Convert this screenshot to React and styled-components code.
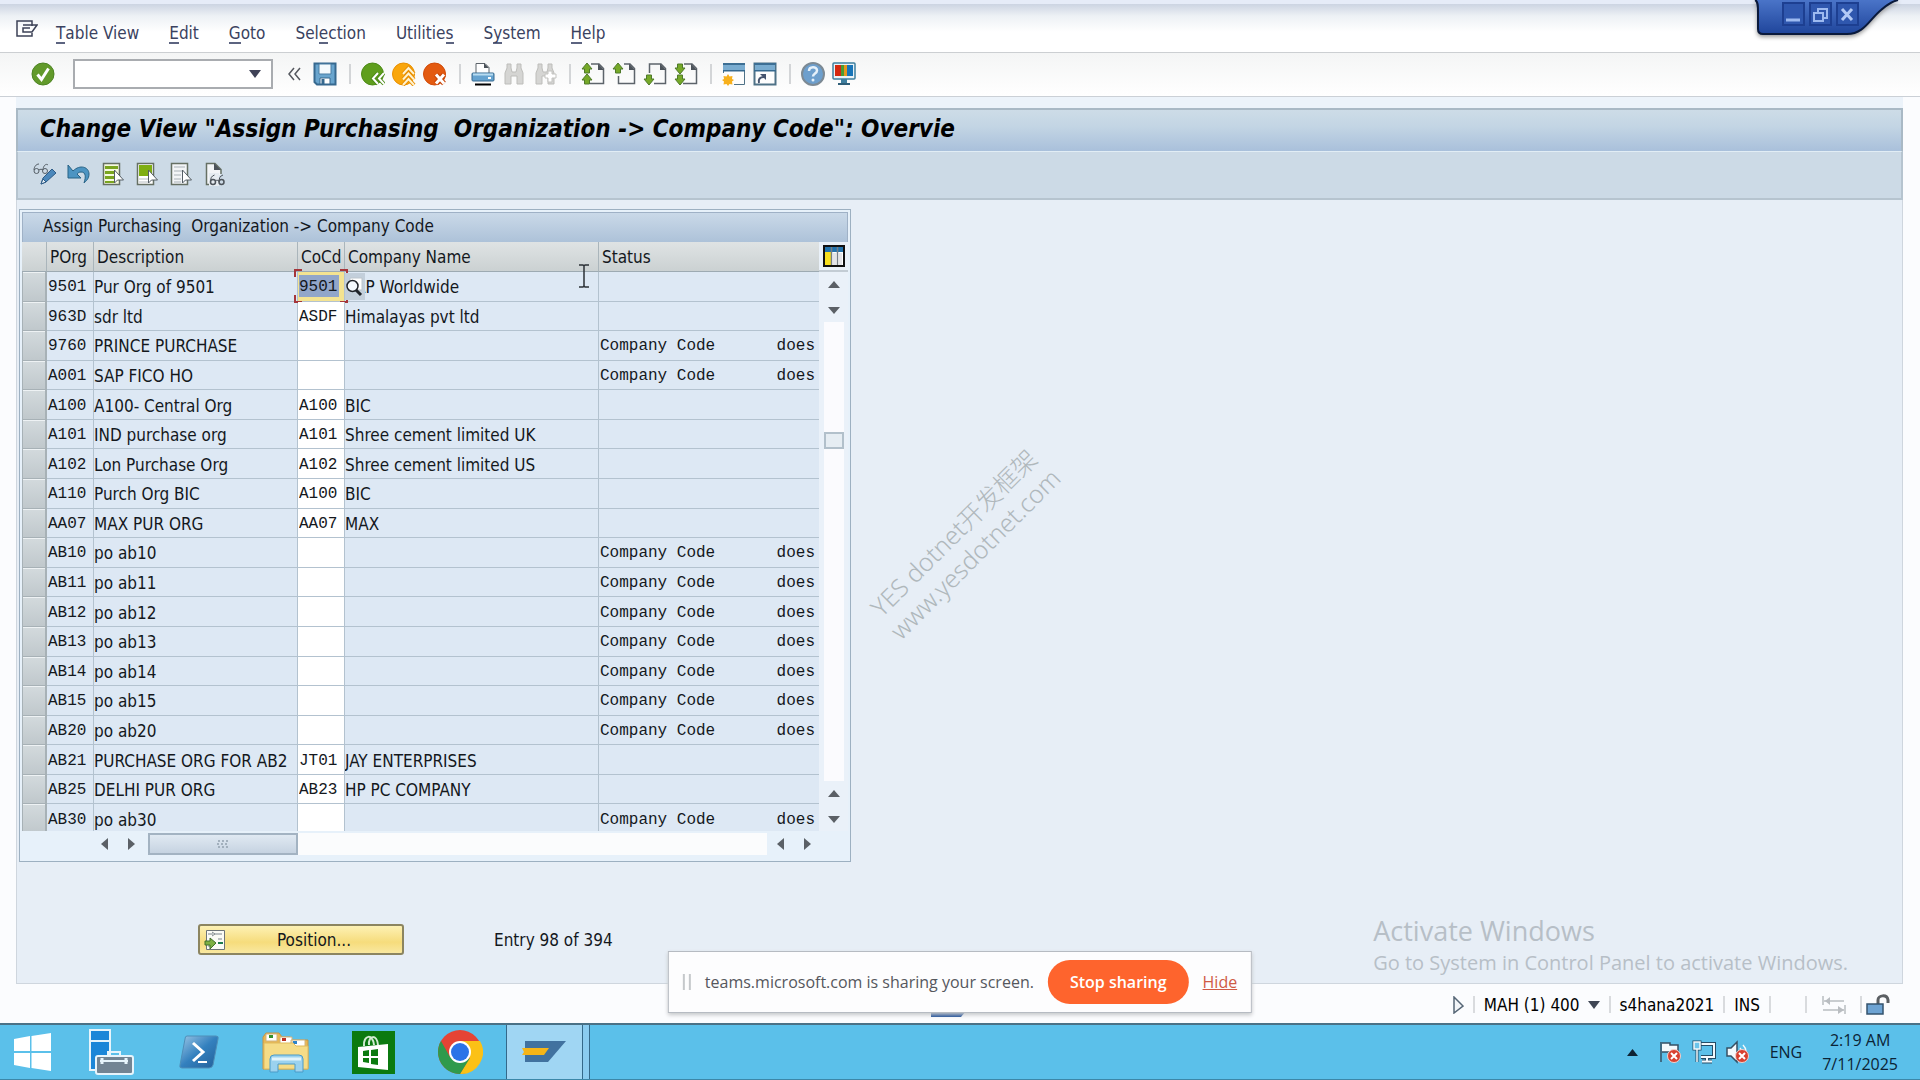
import React from 'react';
import styled, { createGlobalStyle, css } from 'styled-components';

const ui = '"DejaVu Sans Condensed", "DejaVu Sans", sans-serif';
const mono = '"Liberation Mono", monospace';
const segoe = '"Open Sans", "Noto Sans", sans-serif';

const menus = [
  ['', 'T', 'able View'],
  ['', 'E', 'dit'],
  ['', 'G', 'oto'],
  ['Sel', 'e', 'ction'],
  ['Utilitie', 's', ''],
  ['S', 'y', 'stem'],
  ['', 'H', 'elp'],
];

const rows = [
  ['9501', 'Pur Org of 9501', '9501', 'SAP Worldwide'],
  ['963D', 'sdr ltd', 'ASDF', 'Himalayas pvt ltd'],
  ['9760', 'PRINCE PURCHASE', '', ''],
  ['A001', 'SAP FICO HO', '', ''],
  ['A100', 'A100- Central Org', 'A100', 'BIC'],
  ['A101', 'IND purchase org', 'A101', 'Shree cement limited UK'],
  ['A102', 'Lon Purchase Org', 'A102', 'Shree cement limited US'],
  ['A110', 'Purch Org BIC', 'A100', 'BIC'],
  ['AA07', 'MAX PUR ORG', 'AA07', 'MAX'],
  ['AB10', 'po ab10', '', ''],
  ['AB11', 'po ab11', '', ''],
  ['AB12', 'po ab12', '', ''],
  ['AB13', 'po ab13', '', ''],
  ['AB14', 'po ab14', '', ''],
  ['AB15', 'po ab15', '', ''],
  ['AB20', 'po ab20', '', ''],
  ['AB21', 'PURCHASE ORG FOR AB2', 'JT01', 'JAY ENTERPRISES'],
  ['AB25', 'DELHI PUR ORG', 'AB23', 'HP PC COMPANY'],
  ['AB30', 'po ab30', '', ''],
];

const Svg = ({ w = 24, h = 24, box = '0 0 24 24', children }) => (
  <svg width={w} height={h} viewBox={box} fill="none" aria-hidden="true">
    {children}
  </svg>
);

const Sheet = () => (
  <path d="M10 2h8l4.500 4.500V21.500H9" stroke="#5d646b" strokeWidth="1.500" fill="none" />
);
const Fold = () => <path d="M17 1.500V8h6z" fill="#4d545b" />;
const Up = ({ y = 0 }) => (
  <path
    d={`M6 ${1 + y}l5 6H8.500v4h-5V${7 + y}H1z`}
    fill="#76a928"
    stroke="#4f7a2a"
  />
);
const Down = ({ y = 0 }) => (
  <path
    d={`M6 ${23 + y}l5-6H8.500v-4h-5v4H1z`}
    fill="#76a928"
    stroke="#4f7a2a"
  />
);
const Binoculars = () => (
  <path
    d="M3 22V11l2-5V2h4v4l1 4h4l1-4V2h4v4l2 5v11h-6v-8h-6v8z"
    fill="#d5d5d3"
    stroke="#bdbdba"
  />
);

const icons = {
  check: (
    <Svg>
      <circle cx="12" cy="12" r="11" fill="#629a2b" stroke="#4d8423" />
      <path d="M6.500 12.500l4 5 7-11" stroke="#fff" strokeWidth="3" />
    </Svg>
  ),
  save: (
    <Svg>
      <path d="M1.500 1.500h21v21H4l-2.500-2.500z" fill="#69a5ce" stroke="#36698f" strokeWidth="2" />
      <path d="M6 2h12v10H6z" fill="#f4fafd" stroke="#4a7ea4" />
      <path d="M7 16h10v6H7z" fill="#fff" stroke="#36698f" />
      <path d="M8.500 17h3v5h-3z" fill="#36698f" />
    </Svg>
  ),
  back: (
    <Svg>
      <circle cx="11.500" cy="12" r="11" fill="#5f9e1d" stroke="#4c8a17" />
      <path d="M17 11l-5 5.500 5 5.500M23 11l-5 5.500 5 5.500" stroke="#4c8a17" strokeWidth="4" />
      <path d="M17 11l-5 5.500 5 5.500M23 11l-5 5.500 5 5.500" stroke="#fff" strokeWidth="2" />
    </Svg>
  ),
  exit: (
    <Svg>
      <circle cx="11.500" cy="12" r="11" fill="#f9a60c" stroke="#e98f00" />
      <path d="M11 12l5.500-6 5.500 6M11 17.500l5.500-6 5.500 6M11 23l5.500-6 5.500 6" stroke="#e98f00" strokeWidth="4" />
      <path d="M11 12l5.500-6 5.500 6M11 17.500l5.500-6 5.500 6M11 23l5.500-6 5.500 6" stroke="#fff3d0" strokeWidth="2" />
    </Svg>
  ),
  cancel: (
    <Svg>
      <circle cx="11.500" cy="12" r="11" fill="#e35a10" stroke="#d14a08" />
      <path d="M13 12.500l8 9M21 12.500l-8 9" stroke="#c84406" strokeWidth="5" />
      <path d="M13 12.500l8 9M21 12.500l-8 9" stroke="#fff" strokeWidth="3" />
    </Svg>
  ),
  print: (
    <Svg>
      <path d="M5 11V1.500h9l4 4V11" fill="#fff" stroke="#5d646b" />
      <path d="M13 1v5h5z" fill="#4d545b" />
      <rect x="1" y="11" width="22" height="8" rx="1" fill="#66a3d0" stroke="#36698f" />
      <path d="M2 12.500h20" stroke="#b9dcf1" strokeWidth="2" />
      <path d="M17 16h3" stroke="#fff" strokeWidth="2" />
      <path d="M4 21.500h16v2H4z" fill="#000" />
    </Svg>
  ),
  find: (
    <Svg>
      <Binoculars />
    </Svg>
  ),
  findNext: (
    <Svg>
      <Binoculars />
      <path d="M15 9h4v3h4v4h-4v4h-4v-4h-3v-4h3z" fill="#fff" stroke="#c4c4c1" />
    </Svg>
  ),
  first: (
    <Svg>
      <Sheet />
      <Fold />
      <Up />
      <Up y={11} />
    </Svg>
  ),
  prev: (
    <Svg>
      <path d="M12 2h6l4.500 4.500V21.500H6.500V14" stroke="#5d646b" strokeWidth="1.500" />
      <Fold />
      <Up />
    </Svg>
  ),
  next: (
    <Svg>
      <path d="M6.500 11V2H18l4.500 4.500V21.500H11" stroke="#5d646b" strokeWidth="1.500" />
      <Fold />
      <Down />
    </Svg>
  ),
  last: (
    <Svg>
      <Sheet />
      <Fold />
      <Down y={-11} />
      <Down />
    </Svg>
  ),
  session: (
    <Svg>
      <path d="M1.500 1.500h21v21h-21z" fill="#fdfdfd" stroke="#4f7287" />
      <path d="M1 1h22v8H1z" fill="#79acd0" />
      <path d="M1 1h22v2H1z" fill="#3d6f94" />
      <path d="M1 8h22v1.500H1z" fill="#36698f" />
      <path d="M0 11h12v13H0z" fill="#fdfdfd" />
      <path d="M6 12l1.500 2.500 3-.5-.5 3L12 18l-2 1.500.5 3-3-.5L6 24l-1.500-2-3 .5.5-3L0 18l2-1-.5-3 3 .5z" fill="#f7b01c" />
    </Svg>
  ),
  shortcut: (
    <Svg>
      <path d="M1.500 1.500h21v21h-21z" fill="#fdfdfd" stroke="#4f7287" strokeWidth="2" />
      <path d="M2 2h20v7H2z" fill="#79acd0" />
      <path d="M1 1h22v2H1z" fill="#3d6f94" />
      <path d="M1 8h22v1.500H1z" fill="#36698f" />
      <path d="M6 21c-1-4 1-6 5-6" stroke="#46546e" strokeWidth="2" />
      <path d="M7 12h6v6z" fill="#46546e" />
    </Svg>
  ),
  help: (
    <Svg>
      <circle cx="12" cy="12" r="11" fill="#6d9fcd" stroke="#7d8a94" strokeWidth="2" />
      <path d="M8 9c0-5 8-5 8-.5 0 3-4 3-4 6" stroke="#e6f1fa" strokeWidth="2.500" />
      <circle cx="12" cy="18" r="1.500" fill="#e6f1fa" />
    </Svg>
  ),
  monitor: (
    <Svg>
      <rect x="1" y="1" width="22" height="16" rx="1" fill="#e8f2f7" stroke="#3e7f9f" strokeWidth="1.500" />
      <path d="M3 3h6v11H3z" fill="#d4270f" />
      <path d="M9 3h3v11H9z" fill="#4b9b32" />
      <path d="M12 3h3v11h-3z" fill="#e8961b" />
      <path d="M15 3h6v11h-6z" fill="#1774b8" />
      <path d="M9 17h6v4H9z" fill="#3e7f9f" />
      <path d="M6 21h12v2H6z" fill="#2f5f79" />
    </Svg>
  ),
  display: (
    <Svg>
      <path d="M6 2C3 2 1 5 1 8M15 3c-2-2-5 1-5 5" stroke="#555e66" />
      <circle cx="3.500" cy="9" r="2.500" stroke="#555e66" />
      <circle cx="12" cy="9" r="2.500" stroke="#555e66" />
      <path d="M6 8c1-1 3-1 4 0" stroke="#555e66" />
      <path d="M8 22l2-6L19 7l4 4-10 9z" fill="#4a87bb" stroke="#2d5b86" />
      <path d="M8 22l2-5 3 3z" fill="#e8f1f7" stroke="#2d5b86" />
    </Svg>
  ),
  undo: (
    <Svg>
      <path d="M6 9c7-7 16-4 16 3 0 5-3 7-5 9 2-6 2-11-3-11-2 0-3 1-4 2l4 4H1V3z" fill="#4c94c2" stroke="#276285" />
    </Svg>
  ),
  selectAll: (
    <Svg>
      <path d="M2.500 1.500h16v21h-16z" fill="#f6fadf" stroke="#667064" strokeWidth="1.500" />
      <path d="M4 4h13v3H4zM4 9h11v3H4zM4 14h9v3H4zM4 19h9v2H4z" fill="#7aa51f" />
      <path d="M13.500 8v13l3-3h6z" fill="#fff" stroke="#555e66" />
    </Svg>
  ),
  selectBlock: (
    <Svg>
      <path d="M2.500 1.500h16v21h-16z" fill="#fff" stroke="#667064" strokeWidth="1.500" />
      <path d="M4 3h13v11H4z" fill="#7fae12" />
      <path d="M4 17h9M4 20h9" stroke="#b6bcc0" />
      <path d="M13.500 8v13l3-3h6z" fill="#fff" stroke="#555e66" />
    </Svg>
  ),
  deselect: (
    <Svg>
      <path d="M2.500 1.500h16v21h-16z" fill="#f3f5f7" stroke="#667064" strokeWidth="1.500" />
      <path d="M5 5h11M5 9h9M5 13h7M5 17h7M5 20h7" stroke="#a9b1b7" />
      <path d="M13.500 8v13l3-3h6z" fill="#fff" stroke="#555e66" />
    </Svg>
  ),
  details: (
    <Svg>
      <path d="M7 22.500H3.500v-21H12l6 6V12" fill="#f3f5f7" stroke="#667064" strokeWidth="1.500" />
      <path d="M11 1v7h7z" fill="#4d545b" />
      <path d="M6 11h10v13H6z" fill="#e6ecf1" />
      <circle cx="10" cy="20" r="2.500" stroke="#4d545b" strokeWidth="1.500" />
      <circle cx="18.500" cy="20" r="2.500" stroke="#4d545b" strokeWidth="1.500" />
      <path d="M7.500 20c0-4 1-6 4-7M16 20c0-4 1-6 4-7M12.500 19c1-1 2-1 3.500 0" stroke="#4d545b" />
    </Svg>
  ),
};

const toolbar = [
  [['save', 'Save']],
  [['back', 'Back'], ['exit', 'Exit'], ['cancel', 'Cancel']],
  [['print', 'Print'], ['find', 'Find'], ['findNext', 'Find next']],
  [['first', 'First page'], ['prev', 'Previous page'], ['next', 'Next page'], ['last', 'Last page']],
  [['session', 'New session'], ['shortcut', 'Create shortcut']],
  [['help', 'Help'], ['monitor', 'Customize local layout']],
];

const appActions = [
  ['display', 'Display / Change'],
  ['undo', 'Undo'],
  ['selectAll', 'Select all'],
  ['selectBlock', 'Select block'],
  ['deselect', 'Deselect all'],
  ['details', 'Details'],
];

const Arrow = ({ dir }) => {
  const d = {
    up: 'M0 9l6-7 6 7z',
    down: 'M0 3l6 7 6-7z',
    left: 'M9 0L2 6l7 6z',
    right: 'M3 0l7 6-7 6z',
  }[dir];
  return (
    <ArrowButton type="button" aria-label={`Scroll ${dir}`}>
      <Svg w={12} h={12} box="0 0 12 12">
        <path d={d} fill="#5b6066" />
      </Svg>
    </ArrowButton>
  );
};

const TrayCross = () => (
  <>
    <circle cx="16" cy="16" r="6.500" fill="#d8402f" stroke="#f3d0cc" />
    <path d="M13 13l6 6M19 13l-6 6" stroke="#fff" strokeWidth="2" />
  </>
);

const App = () => (
  <Desktop>
    <GlobalStyle />
    <MenuBar>
      <MenuIcon type="button" aria-label="System menu">
        <Svg w={22} h={18} box="0 0 22 18">
          <path d="M16 6V1H1v15h15v-3" stroke="#3c4257" strokeWidth="1.500" />
          <path d="M7 5h14l-5 7H7V8h7" stroke="#3c4257" strokeWidth="1.500" />
        </Svg>
      </MenuIcon>
      {menus.map(([before, key, after]) => (
        <MenuItem type="button" key={before + key + after}>
          {before}
          <u>{key}</u>
          {after}
        </MenuItem>
      ))}
    </MenuBar>
    <WindowControls>
      <Svg w={148} h={38} box="0 0 148 38">
        <defs>
          <linearGradient id="tab" x1="0" y1="0" x2="0" y2="1">
            <stop offset="0" stopColor="#4a74c8" />
            <stop offset="1" stopColor="#1f459b" />
          </linearGradient>
        </defs>
        <path d="M1 0c3 1 3 6 3 12v17q0 5 5 5h84c17 0 22-14 34-24q9-8 17-10z" fill="url(#tab)" />
        <path d="M1 0c3 1 3 6 3 12v17q0 5 5 5h84c17 0 22-14 34-24q9-8 17-10" stroke="#0a1a3c" strokeWidth="2" />
        <path d="M29 3h21v22H29zM56 3h21v22H56zM83 3h21v22H83z" fill="#2f57ae" stroke="#1d3f91" strokeWidth="2" />
        <path d="M32 20h14" stroke="#9dbaf0" strokeWidth="3" />
        <path d="M64 12V9h9v9h-4M60 13h9v8h-9z" stroke="#9dbaf0" strokeWidth="2" />
        <path d="M88 9l10 11M98 9L88 20" stroke="#b2c9f5" strokeWidth="3" />
      </Svg>
    </WindowControls>
    <Toolbar>
      <IconButton type="button" aria-label="Enter">{icons.check}</IconButton>
      <CommandField>
        <input aria-label="Command" />
        <button type="button" aria-label="Command history">
          <Svg w={12} h={8} box="0 0 12 8">
            <path d="M0 0h12L6 8z" fill="#3f4257" />
          </Svg>
        </button>
      </CommandField>
      <IconButton type="button" aria-label="Hide command field">
        <Svg w={14} h={14} box="0 0 14 14">
          <path d="M7 1L2 7l5 6M13 1L8 7l5 6" stroke="#55585f" strokeWidth="1.500" />
        </Svg>
      </IconButton>
      {toolbar.map((group, i) => (
        <ToolGroup key={i}>
          {group.map(([name, label]) => (
            <IconButton type="button" key={name} aria-label={label}>
              {icons[name]}
            </IconButton>
          ))}
        </ToolGroup>
      ))}
    </Toolbar>
    <Screen>
      <Title>{'Change View "Assign Purchasing  Organization -> Company Code": Overvie'}</Title>
      <AppToolbar>
        {appActions.map(([name, label]) => (
          <IconButton type="button" key={name} aria-label={label}>
            {icons[name]}
          </IconButton>
        ))}
      </AppToolbar>
      <Body>
        <TableBox>
          <TableTitle>{'Assign Purchasing  Organization -> Company Code'}</TableTitle>
          <TableArea>
            <TableClip>
              <Table>
                <colgroup>
                  <Col $w={25} />
                  <Col $w={47} />
                  <Col $w={204} />
                  <Col $w={47} />
                  <Col $w={254} />
                  <Col $w={220} />
                </colgroup>
                <thead>
                  <tr>
                    <th aria-label="Select" />
                    <th>POrg</th>
                    <th>Description</th>
                    <th>CoCd</th>
                    <th>Company Name</th>
                    <th>Status</th>
                  </tr>
                </thead>
                <tbody>
                  {rows.map(([org, desc, code, company], i) => (
                    <tr key={org}>
                      <SelectorCell>
                        <button type="button" aria-label={`Select ${org}`} />
                      </SelectorCell>
                      <CodeCell>{org}</CodeCell>
                      <Cell>{desc}</Cell>
                      <FieldCell $active={i === 0}>
                        <input aria-label={`Company code for ${org}`} defaultValue={code} />
                        {i === 0 && (
                          <>
                            <Focus>
                              <Svg w={54} h={34} box="0 0 54 34">
                                <path
                                  d="M1 8V1h7M46 1h7v7M53 26v7h-7M8 33H1v-7"
                                  stroke="#a5363a"
                                  strokeWidth="2"
                                />
                              </Svg>
                            </Focus>
                            <SearchHelp type="button" aria-label="Search help">
                              <Svg w={20} h={22} box="0 0 20 22">
                                <path d="M5 2h12v12H5z" fill="#fff" stroke="#bcc5cd" />
                                <circle cx="7.500" cy="10" r="5.500" fill="#f4f9fd" stroke="#20242a" strokeWidth="1.500" />
                                <path d="M11 14l5 5" stroke="#20242a" strokeWidth="3" />
                              </Svg>
                            </SearchHelp>
                          </>
                        )}
                      </FieldCell>
                      <Cell>{company}</Cell>
                      <CodeCell>
                        {!company && (
                          <StatusText>
                            <span>Company Code</span>
                            <span>does</span>
                          </StatusText>
                        )}
                      </CodeCell>
                    </tr>
                  ))}
                </tbody>
              </Table>
            </TableClip>
            <VScroll>
              <ConfigButton type="button" aria-label="Table settings">
                <Svg w={22} h={22} box="0 0 22 22">
                  <path d="M1 1h20v20H1z" fill="#fff" stroke="#111" strokeWidth="2" />
                  <path d="M2 2h18v5H2z" fill="#2373ad" />
                  <path d="M2 7h6v13H2z" fill="#f7df1e" />
                  <path d="M8.500 2v18M14.500 2v18" stroke="#777f88" strokeWidth="1.500" />
                  <path d="M10 8h3v12h-3zM16 8h3v12h-3z" fill="#e4e4e8" />
                </Svg>
              </ConfigButton>
              <Arrow dir="up" />
              <Arrow dir="down" />
              <VTrack>
                <VThumb />
              </VTrack>
              <Arrow dir="up" />
              <Arrow dir="down" />
            </VScroll>
          </TableArea>
          <HScroll>
            <Arrow dir="left" />
            <Arrow dir="right" />
            <HTrack>
              <HThumb>
                <Svg w={12} h={9} box="0 0 12 9">
                  <path d="M1 1h2M5 1h2M9 1h2M0 4h2M4 4h2M8 4h2M1 7h2M5 7h2M9 7h2" stroke="#93a1ae" strokeWidth="1.500" />
                </Svg>
              </HThumb>
            </HTrack>
            <Arrow dir="left" />
            <Arrow dir="right" />
          </HScroll>
        </TableBox>
        <Footer>
          <PositionButton type="button">
            <Svg w={22} h={22} box="0 0 22 22">
              <path d="M2.500 1.500h18v19h-18z" fill="#fbfbf6" stroke="#6d7478" />
              <path d="M4 5h5M11 5h7M14 10h4M4 17h3" stroke="#a7adb0" strokeWidth="1.500" />
              <path d="M8 3l3 2-3 2" stroke="#7d858a" />
              <path d="M14 14h5" stroke="#1f7c4d" strokeWidth="2" />
              <path d="M1 12h5V9l6 5-6 6v-4H1z" fill="#7eb043" stroke="#41702b" />
            </Svg>
            <span>Position...</span>
          </PositionButton>
          <span>Entry 98 of 394</span>
        </Footer>
      </Body>
    </Screen>
    <StatusBar>
      <BottomLogo>
        <Svg w={44} h={17} box="0 0 44 17">
          <path d="M0 0h44L30 17H0z" fill="#174a97" />
        </Svg>
      </BottomLogo>
      <StatusIcon type="button" aria-label="Expand">
        <Svg w={11} h={18} box="0 0 11 18">
          <path d="M1 1l9 9-9 7z" fill="#f2f5f8" stroke="#566676" strokeWidth="1.500" />
        </Svg>
      </StatusIcon>
      <StatusItem>
        MAH (1) 400
        <Svg w={12} h={8} box="0 0 12 8">
          <path d="M0 0h12L6 8z" fill="#3f4654" />
        </Svg>
      </StatusItem>
      <StatusItem>s4hana2021</StatusItem>
      <StatusItem>INS</StatusItem>
      <StatusItem $w={36} />
      <StatusItem $w={55}>
        <Svg w={24} h={18} box="0 0 24 18">
          <path d="M1 0v9M23 9v9M2 5h20M1 14h21" stroke="#b9bdc1" strokeWidth="1.500" />
          <path d="M8 1L3 5l5 4zM16 10l6 4-6 4z" fill="#b9bdc1" />
        </Svg>
      </StatusItem>
      <StatusItem $w={34}>
        <Svg w={24} h={21} box="0 0 24 21">
          <path d="M12 10V6c0-5 9-6 10 0v3" stroke="#5b5f63" strokeWidth="3" />
          <rect x="1" y="10" width="16" height="10" fill="#6da3d3" stroke="#35536e" strokeWidth="1.500" />
        </Svg>
      </StatusItem>
    </StatusBar>
    <Taskbar>
      <TaskButton type="button" $w={64} $pad={13} aria-label="Start">
        <Svg w={39} h={38} box="0 0 39 38">
          <path d="M1 6l16-3v15H1zM18.500 3L38 0v18H18.500zM1 20h16v15L1 32zM18.500 20H38v18l-19.500-3z" fill="#fff" />
        </Svg>
      </TaskButton>
      <TaskButton type="button" $w={88} $pad={24} aria-label="Server Manager">
        <Svg w={46} h={46} box="0 0 46 46">
          <path d="M2 1h20v40H2z" fill="#1b86d8" stroke="#e7f4fb" strokeWidth="2" />
          <path d="M2 12h20" stroke="#e7f4fb" strokeWidth="2" />
          <path d="M20 27v-4h12v4" stroke="#e7f4fb" strokeWidth="2" />
          <rect x="8" y="27" width="37" height="18" rx="2" fill="#728493" stroke="#e7f4fb" strokeWidth="2" />
          <path d="M12 32h28" stroke="#e7f4fb" strokeWidth="2" />
          <path d="M14 29v6M38 29v6" stroke="#e7f4fb" strokeWidth="3" />
        </Svg>
      </TaskButton>
      <TaskButton type="button" $w={88} $pad={27} aria-label="PowerShell">
        <Svg w={40} h={34} box="0 0 40 34">
          <defs>
            <linearGradient id="ps" x1="0" y1="0" x2="1" y2="1">
              <stop offset="0" stopColor="#9dc7e6" />
              <stop offset="0.500" stopColor="#3380be" />
              <stop offset="1" stopColor="#235f98" />
            </linearGradient>
          </defs>
          <path d="M8 1h29q3 0 2 3l-5 26q-1 3-4 3H3q-3 0-2-3L6 4q0-3 2-3z" fill="url(#ps)" stroke="#4f8fb9" />
          <path d="M14 8l10 9-10 9" stroke="#fff" strokeWidth="3" />
          <path d="M19 27h9" stroke="#fff" strokeWidth="2" />
        </Svg>
      </TaskButton>
      <TaskButton type="button" $w={88} $pad={22} aria-label="File Explorer">
        <Svg w={48} h={42} box="0 0 48 42">
          <path d="M1 6l3-4h13l3 4h8l2 3h16v29H1z" fill="#e8b754" stroke="#c49546" />
          <path d="M4 3h11v7H4zM18 6h12v7H18zM29 9h14v7H29z" fill="#fff" stroke="#cfb37e" />
          <path d="M7 4h4v3H7z" fill="#35922c" />
          <path d="M20 7h4v3h-4z" fill="#bc3022" />
          <path d="M31 10h4v3h-4z" fill="#2d83ca" />
          <path d="M2 12h29l3 3h12v23H2z" fill="#f5dc87" stroke="#dfb95c" />
          <path d="M8 41V28q0-4 4-4h25q4 0 4 4v13h-8v-8H16v8z" fill="#9bd2ee" stroke="#4a9bc8" />
          <path d="M10 28h29" stroke="#e1f4fc" strokeWidth="3" />
        </Svg>
      </TaskButton>
      <TaskButton type="button" $w={88} $pad={24} aria-label="Store">
        <Svg w={43} h={43} box="0 0 43 43">
          <path d="M0 0h43v43H0z" fill="#0b7a10" />
          <path d="M6 16l30-3v26L6 36z" fill="#fff" />
          <path d="M12 15c-1-11 9-13 10-1M17 14c-1-10 8-11 9 0" stroke="#d3ebd3" strokeWidth="2" />
          <path d="M11 20l6-1v6h-6zM19 19l7-1v7h-7zM11 27h6v5l-6-1zM19 27h7v7l-7-1z" fill="#0b7a10" />
        </Svg>
      </TaskButton>
      <TaskButton type="button" $w={90} $pad={21} aria-label="Chrome">
        <Svg w={46} h={46} box="0 0 46 46">
          <circle cx="23" cy="23" r="22" fill="#e54435" />
          <path d="M23 12h20A22 22 0 0 1 23 45l10-17z" fill="#fbc116" />
          <path d="M4 12A22 22 0 0 0 23 45l10-16-9 4-11-5z" fill="#2f9a4c" />
          <circle cx="23" cy="23" r="11" fill="#fff" />
          <circle cx="23" cy="23" r="9" fill="#2a73e8" />
        </Svg>
      </TaskButton>
      <TaskButton type="button" $w={77} $pad={14} $active aria-label="SAP Logon">
        <Svg w={46} h={22} box="0 0 46 22">
          <path d="M4 0h41L27 21H4z" fill="#41729f" />
          <path d="M1 7h27l-5 7H1l2-3z" fill="#f5b518" />
        </Svg>
      </TaskButton>
      <TaskStack />
      <Tray>
        <Svg w={11} h={8} box="0 0 11 8">
          <path d="M0 8l5.500-7L11 8z" fill="#0e2333" />
        </Svg>
        <TrayIcons>
          <Svg>
            <path d="M3 2v20M4 3h8v2h8v9H12v-2H4" fill="#f4fafd" stroke="#365064" strokeWidth="1.500" />
            <TrayCross />
          </Svg>
          <Svg>
            <path d="M7 4h15v13H9M15 17v4M10 21.500h10" stroke="#244c66" strokeWidth="4" />
            <path d="M7 4h15v13H9M15 17v4M10 21.500h10" stroke="#f2f9fd" strokeWidth="2" />
            <path d="M2 2h6v7H2zM5 9v13" fill="#6dc4ea" stroke="#244c66" strokeWidth="3" />
            <path d="M2 2h6v7H2zM5 9v13" fill="#6dc4ea" stroke="#f2f9fd" strokeWidth="1.500" />
          </Svg>
          <Svg>
            <path d="M1 8h4l6-6v20l-6-6H1z" fill="#f4fafd" stroke="#365064" strokeWidth="1.500" />
            <path d="M14 8c2 2 2 6 0 8M17 5c4 4 4 9 0 13" stroke="#f4fafd" strokeWidth="1.500" />
            <TrayCross />
          </Svg>
        </TrayIcons>
        <span>ENG</span>
        <Clock>
          <span>2:19 AM</span>
          <span>7/11/2025</span>
        </Clock>
      </Tray>
    </Taskbar>

    <Cursor>
      <Svg w={12} h={24} box="0 0 12 24">
        <path d="M1 1h4l1 1 1-1h4M6 2v20M1 23h4l1-1 1 1h4" stroke="#2b3036" strokeWidth="1.500" />
      </Svg>
    </Cursor>
    <Watermark>
      <div>YES dotnet开发框架</div>
      <div>www.yesdotnet.com</div>
    </Watermark>
    <Activate>
      <h2>Activate Windows</h2>
      <p>Go to System in Control Panel to activate Windows.</p>
    </Activate>
    <ShareBar>
      <Grip />
      <span>teams.microsoft.com is sharing your screen.</span>
      <StopButton type="button">Stop sharing</StopButton>
      <a href="#hide">Hide</a>
    </ShareBar>
  </Desktop>
);

const GlobalStyle = createGlobalStyle`
  * {
    box-sizing: border-box;
  }

  body {
    margin: 0;
    font-family: ${ui};
    font-size: 17px;
    line-height: 20px;
    color: #14181d;
  }

  button, input {
    font: inherit;
    color: inherit;
    margin: 0;
    padding: 0;
    border: 0;
    background: none;
    border-radius: 0;
    outline: none;
  }

  svg {
    display: block;
    flex: none;
  }
`;

const Desktop = styled.div`
  position: relative;
  display: flex;
  flex-direction: column;
  min-height: 100vh;
  overflow: hidden;
  background: #fbfcfe;
`;

const MenuBar = styled.nav`
  display: flex;
  align-items: center;
  gap: 30px;
  height: 53px;
  padding: 10px 16px 0;
  border-bottom: 1px solid #cccfd2;
  border-top: 4px solid #e6ecf8;
  background: linear-gradient(#ccd4e2, #edf1f5 12px, #fff 28px);
`;

const MenuIcon = styled.button`
  margin-right: -12px;
  padding-bottom: 8px;
`;

const MenuItem = styled.button`
  color: #3a4260;

  u {
    display: inline-block;
    border-bottom: 2px solid #5c6480;
    line-height: 18px;
    text-decoration: none;
  }
`;

const WindowControls = styled.div`
  position: absolute;
  top: 0;
  right: 18px;
  filter: drop-shadow(0 2px 2px #999);
`;

const Toolbar = styled.div`
  display: flex;
  align-items: center;
  height: 44px;
  padding: 0 0 2px 31px;
  border-bottom: 1px solid #cbd0d6;
  background: linear-gradient(#f4f5f5, #fff);
`;

const IconButton = styled.button`
  display: flex;
`;

const CommandField = styled.div`
  display: flex;
  align-items: center;
  width: 200px;
  height: 30px;
  margin: 0 14px 0 18px;
  padding-right: 10px;
  border: 2px solid #a9acb0;
  background: #fff;

  input {
    flex: 1;
    min-width: 0;
    padding-left: 4px;
  }
`;

const ToolGroup = styled.div`
  display: flex;
  align-items: center;
  gap: 7px;
  margin-left: 12px;

  & + &::before {
    content: '';
    width: 2px;
    height: 20px;
    margin-right: 3px;
    background: #d3d5d7;
  }
`;

const Screen = styled.main`
  flex: 1;
  display: flex;
  flex-direction: column;
  margin: 0 17px 0 16px;
  padding-top: 11px;
  background: #ecf3fa;
`;

const Title = styled.h1`
  height: 44px;
  margin: 0;
  padding: 5px 22px;
  border: 2px solid #a9b9c5;
  border-bottom: 1px solid #e1edf5;
  background: linear-gradient(#cddce7, #c3d5e4 40%, #a9c0db);
  color: #000;
  font-size: 24px;
  font-style: italic;
  font-weight: bold;
  line-height: 28px;
  white-space: pre;
`;

const AppToolbar = styled.div`
  display: flex;
  align-items: center;
  gap: 10px;
  height: 48px;
  padding: 0 15px 2px;
  border: 2px solid #b6c4cf;
  border-top: 0;
  background: #ccdae6;
`;

const Body = styled.div`
  flex: 1;
  padding: 9px 2px 24px;
  border: 1px solid #cfd6de;
  border-top: 0;
  background: #e7eef6;
`;

const TableBox = styled.section`
  width: fit-content;
  padding: 2px;
  border: 1px solid #9db0c1;
  background: #e7f1fa;
`;

const TableTitle = styled.h2`
  height: 30px;
  margin: 0;
  padding: 2px 20px;
  border: 1px solid #9fb1c6;
  border-bottom: 0;
  background: linear-gradient(#cad9e8, #adc2d9);
  font-size: 17px;
  font-weight: normal;
  line-height: 22px;
  white-space: pre;
`;

const TableArea = styled.div`
  display: flex;
`;

const TableClip = styled.div`
  height: 589px;
  overflow: hidden;
`;

const Table = styled.table`
  height: 592px;
  border-spacing: 0;
  table-layout: fixed;
  width: 797px;

  th {
    height: 30px;
    padding: 1px 3px 0;
    border-right: 1px solid #aab5bb;
    border-bottom: 1px solid #9daab2;
    background: linear-gradient(#dfe3e4, #cbd1d2);
    font-weight: normal;
    text-align: left;
    white-space: nowrap;
  }

  th:last-child {
    border-right: 0;
  }
`;

const Col = styled.col`
  width: ${({ $w }) => $w}px;
`;

const Cell = styled.td`
  padding: 2px 0 0;
  border-right: 1px solid #b3c2cf;
  border-bottom: 1px solid #b3c2cf;
  background: #dde8f4;
  white-space: nowrap;

  &:last-child {
    border-right: 0;
  }
`;

const CodeCell = styled(Cell)`
  padding: 2px 1px 0;
  font-family: ${mono};
  font-size: 16px;
`;

const SelectorCell = styled(Cell)`
  padding: 0;
  border: 1px solid #a7b1b6;
  border-top: 0;
  border-right: 2px solid #a7b1b6;
  background: linear-gradient(#d3dadd, #c0c8cc);
  box-shadow: inset 0 1px #eef2f4;

  button {
    display: block;
    width: 100%;
    height: 20px;
  }
`;

const FieldCell = styled(Cell)`
  position: relative;
  padding: 0 1px;
  background: #fff;

  input {
    display: block;
    width: 40px;
    height: 22px;
    padding-top: 2px;
    font-family: ${mono};
    font-size: 16px;
  }

  ${({ $active }) =>
    $active &&
    css`
      background: #f4e391;

      input {
        background: #92a6c9;
      }
    `}
`;

const Focus = styled.span`
  position: absolute;
  left: -4px;
  top: -3px;
`;

const SearchHelp = styled.button`
  position: absolute;
  z-index: 1;
  left: 47px;
  top: 1px;
  width: 20px;
  height: 27px;
  padding: 2px 0;
  background: #c3cfdb;
`;

const StatusText = styled.div`
  display: flex;
  justify-content: space-between;
  padding-right: 3px;
`;

const VScroll = styled.div`
  display: flex;
  flex-direction: column;
  align-items: center;
  width: 29px;
  background: #eaf1f9;
`;

const ConfigButton = styled.button`
  display: flex;
  justify-content: center;
  width: 100%;
  height: 30px;
  padding-top: 3px;
  border-bottom: 2px solid #c3ccd4;
`;

const ArrowButton = styled.button`
  display: flex;
  align-items: center;
  justify-content: center;
  width: 26px;
  height: 25px;
`;

const VTrack = styled.div`
  flex: 1;
  width: 20px;
  padding-top: 110px;
  background: #fbfbfe;
`;

const VThumb = styled.div`
  height: 17px;
  border: 2px solid #b2c0cb;
  background: #e6edf3;
`;

const HScroll = styled.div`
  display: flex;
  align-items: center;
  height: 28px;
  padding: 0 28px 2px 70px;
`;

const HTrack = styled.div`
  flex: 1;
  height: 22px;
  margin: 0 1px 0 4px;
  background: #fbfcfd;
`;

const HThumb = styled.div`
  display: flex;
  align-items: center;
  justify-content: center;
  width: 150px;
  height: 22px;
  border: 2px solid #a3b3c2;
  background: linear-gradient(#e0e9f2, #c6d3e1);
`;

const Footer = styled.div`
  display: flex;
  align-items: center;
  gap: 90px;
  padding: 62px 179px 0;
`;

const PositionButton = styled.button`
  display: flex;
  align-items: center;
  width: 206px;
  height: 31px;
  padding: 0 4px;
  border: 2px solid #8c8560;
  border-radius: 3px;
  background: linear-gradient(#fdf1b4, #f6dc7c 60%, #f9e8a0);

  span {
    flex: 1;
    padding-left: 4px;
  }
`;

const StatusBar = styled.footer`
  position: relative;
  display: flex;
  align-items: center;
  justify-content: flex-end;
  height: 39px;
  padding: 2px 26px 0 0;
`;

const BottomLogo = styled.div`
  position: absolute;
  left: calc(50% - 29px);
  bottom: 6px;
`;

const StatusIcon = styled.button`
  margin-right: 9px;
`;

const StatusItem = styled.div`
  display: flex;
  align-items: center;
  justify-content: center;
  gap: 8px;
  width: ${({ $w }) => ($w ? `${$w}px` : 'auto')};
  height: 17px;
  padding: 0 9px;
  border-left: 2px solid #d9dbde;
  color: #000;
`;

const Taskbar = styled.div`
  display: flex;
  height: 57px;
  border-top: 2px solid #4a7186;
  border-bottom: 1px solid #3c87a8;
  background: #5bc0ea;
`;

const TaskButton = styled.button`
  display: flex;
  align-items: center;
  width: ${({ $w }) => $w}px;
  padding-left: ${({ $pad }) => $pad}px;

  ${({ $active }) =>
    $active &&
    css`
      border: 1px solid #34698a;
      border-width: 0 1px;
      background: #a0d6f3;
    `}
`;

const TaskStack = styled.div`
  width: 7px;
  border-right: 1px solid #34698a;
  background: #8accf0;
`;

const Tray = styled.div`
  display: flex;
  align-items: center;
  gap: 20px;
  margin-left: auto;
  padding-right: 22px;
  color: #0b2436;
  font-family: ${segoe};
  font-size: 16px;
`;

const TrayIcons = styled.div`
  display: flex;
  gap: 10px;
`;

const Clock = styled.div`
  display: flex;
  flex-direction: column;
  align-items: center;
  line-height: 24px;
`;

const Cursor = styled.div`
  position: absolute;
  left: 578px;
  top: 264px;
`;

const Watermark = styled.div`
  position: absolute;
  left: 964px;
  top: 543px;
  transform: translate(-50%, -50%) rotate(-45deg);
  color: #b0b8bc;
  font-family: "Noto Sans", "Noto Sans CJK SC", sans-serif;
  font-size: 25px;
  font-weight: 300;
  line-height: 30px;
  text-align: center;
  white-space: nowrap;
`;

const Activate = styled.div`
  position: absolute;
  right: 72px;
  bottom: 103px;
  color: #b7bfc7;
  font-family: ${segoe};
  white-space: nowrap;

  h2 {
    margin: 0;
    font-size: 27px;
    font-weight: normal;
    line-height: 36px;
  }

  p {
    margin: 0;
    font-size: 20px;
    line-height: 28px;
  }
`;

const ShareBar = styled.div`
  position: absolute;
  left: 50%;
  bottom: 67px;
  transform: translateX(-50%);
  display: flex;
  align-items: center;
  gap: 14px;
  height: 62px;
  padding: 0 14px;
  border: 1px solid #b6bbc2;
  background: #fdfdfe;
  box-shadow: 0 2px 4px #c5c7c9;
  color: #55575d;
  font-family: ${segoe};
  font-size: 16px;
  white-space: nowrap;

  a {
    color: #cf5a45;
  }
`;

const Grip = styled.div`
  width: 8px;
  height: 16px;
  border: 2px solid #c5c8cb;
  border-width: 0 2px;
`;

const StopButton = styled.button`
  height: 44px;
  padding: 0 22px;
  border-radius: 22px;
  background: #fe642d;
  color: #fff;
  font-weight: 600;
`;

export default App;
